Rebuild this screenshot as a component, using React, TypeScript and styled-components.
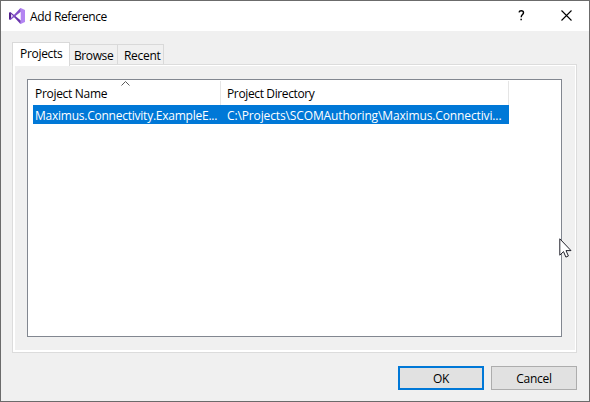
import React from "react";
import styled, { createGlobalStyle } from "styled-components";

const GlobalStyle = createGlobalStyle`
  *, *::before, *::after { box-sizing: border-box; }
  body { margin: 0; overflow: hidden; }
`;

const Dialog = styled.div`
  position: relative;
  display: flex;
  flex-direction: column;
  width: 590px;
  height: 402px;
  border: 1px solid #6b6b6b;
  background: #f0f0f0;
  color: #000;
  font: 12px/16px "Open Sans", "Noto Sans", sans-serif;
  cursor: default;
`;

const TitleBar = styled.header`
  display: flex;
  align-items: center;
  height: 30px;
  padding: 0 0 0 8px;
  background: #fff;
`;

const Label = styled.span<{ $spacing?: number }>`
  display: block;
  white-space: pre;
  letter-spacing: ${(p) => p.$spacing ?? -0.3}px;
`;

const Title = styled.div`
  flex: 1;
  margin-left: 5px;
  padding-top: 1px;
`;

const CaptionButton = styled.button`
  display: grid;
  place-items: center;
  width: 45px;
  height: 29px;
  padding: 0 0 1px;
  border: 0;
  background: none;
`;

const TabStrip = styled.div`
  display: flex;
  align-items: flex-end;
  height: 33px;
  margin-left: 11px;
`;

const Tab = styled.div<{ $width: number; $inset: number; $selected?: boolean }>`
  position: relative;
  width: ${(p) => p.$width}px;
  height: ${(p) => (p.$selected ? 24 : 20)}px;
  margin-bottom: ${(p) => (p.$selected ? -2 : 0)}px;
  padding: 3px 0 0 ${(p) => p.$inset}px;
  border: 1px solid #d9d9d9;
  border-bottom: 0;
  border-left-width: ${(p) => (p.$selected ? 1 : 0)}px;
  background: ${(p) => (p.$selected ? "#fff" : "#f0f0f0")};
  z-index: ${(p) => (p.$selected ? 1 : 0)};
`;

const TabPage = styled.section`
  width: 565px;
  height: 289px;
  margin-left: 11px;
  padding: 13px 12px;
  border: 1px solid #dcdcdc;
  background: #f0f0f0;
  box-shadow: inset 2px 1px 0 #fff, inset -1px -2px 0 #fff;
`;

const ListView = styled.div`
  width: 535px;
  height: 258px;
  margin: 1px 0 0 2px;
  padding: 1px 0 0 5px;
  border: 1px solid #828790;
  background: #fff;
`;

const HeaderRow = styled.div`
  display: grid;
  grid-template-columns: 188px 288px;
  height: 24px;
`;

const HeaderCell = styled.div<{ $inset: number }>`
  position: relative;
  padding: 5px 0 0 ${(p) => p.$inset}px;
  border-right: 1px solid #e5e5e5;
`;

const SortArrow = styled.svg`
  position: absolute;
  top: 0;
  left: 88px;
`;

const ItemRow = styled.div`
  display: grid;
  grid-template-columns: 188px 288px;
  width: 476px;
  height: 19px;
  background: #0078d7;
  color: #fff;
`;

const ItemCell = styled.div<{ $inset: number }>`
  padding: 3px 0 0 ${(p) => p.$inset}px;
`;

const Footer = styled.footer`
  display: flex;
  justify-content: flex-end;
  gap: 7px;
  padding: 13px 12px 0 0;
`;

const PushButton = styled.button<{ $primary?: boolean }>`
  display: grid;
  place-items: center;
  width: 86px;
  height: 24px;
  padding: 2px 0 0;
  border: ${(p) => (p.$primary ? "2px solid #0078d7" : "1px solid #adadad")};
  background: #e1e1e1;
  color: #000;
  font: inherit;
`;

const Pointer = styled.svg`
  position: absolute;
  left: 558px;
  top: 237px;
`;

const StudioLogo = () => (
  <svg width="16" height="16" viewBox="0 0 16 16">
    <path d="M.2 4.4 1.4 4 11.8 12.5V15.8L11 15.5 2.2 6V10.2L1.2 11.9 0 11.2V4.8z" fill="#6a36ad" />
    <path d="M0 4.8 1.8 5.4v5.2L0 11.3z" fill="#52218a" />
    <path d="M.2 11.3 1.5 12 11.8 3.8V.2L11 .5 1.6 10.6z" fill="#8450c8" />
    <path d="M11.7 0 16 2v12l-4.3 2-.9-.4.9-1V1.4l-.9-1z" fill="#b384f2" />
  </svg>
);

export default function App() {
  return (
    <>
      <GlobalStyle />
      <Dialog role="dialog" aria-label="Add Reference">
        <TitleBar>
          <StudioLogo />
          <Title><Label $spacing={-0.37}>Add Reference</Label></Title>
          <CaptionButton aria-label="Help">
            <svg width="7" height="11" viewBox="0 0 7 11">
              <path d="M1 2.4C1.3 1 2.3.8 3.2.8c1.4 0 2.3.7 2.3 1.9 0 1.8-2.3 2-2.3 4.5" fill="none" stroke="#000" strokeWidth="1.4" />
              <path d="M2.4 8.7h1.5v1.5H2.4z" />
            </svg>
          </CaptionButton>
          <CaptionButton aria-label="Close">
            <svg width="11" height="11" viewBox="0 0 11 11">
              <path d="M.5.5l10 10m0-10l-10 10" stroke="#000" strokeWidth="1.1" />
            </svg>
          </CaptionButton>
        </TitleBar>
        <TabStrip>
          <Tab $width={58} $inset={7} $selected><Label>Projects</Label></Tab>
          <Tab $width={48} $inset={4}><Label $spacing={-0.4}>Browse</Label></Tab>
          <Tab $width={46} $inset={6}><Label>Recent</Label></Tab>
        </TabStrip>
        <TabPage>
          <ListView>
            <HeaderRow>
              <HeaderCell $inset={2}>
                <Label>Project Name</Label>
                <SortArrow width="9" height="5" viewBox="0 0 9 5">
                  <path d="M.5 4.5l4-4 4 4" fill="none" stroke="#5a5a5a" />
                </SortArrow>
              </HeaderCell>
              <HeaderCell $inset={6}><Label $spacing={-0.37}>Project Directory</Label></HeaderCell>
            </HeaderRow>
            <ItemRow>
              <ItemCell $inset={2}><Label $spacing={-0.24}>Maximus.Connectivity.ExampleE...</Label></ItemCell>
              <ItemCell $inset={6}><Label $spacing={-0.13}>C:\Projects\SCOMAuthoring\Maximus.Connectivi...</Label></ItemCell>
            </ItemRow>
          </ListView>
        </TabPage>
        <Footer>
          <PushButton $primary><Label>OK</Label></PushButton>
          <PushButton><Label>Cancel</Label></PushButton>
        </Footer>
        <Pointer width="13" height="20" viewBox="0 0 13 20">
          <path d="M.8.8v16.4l3.7-3.6 2.4 5.5 2.5-1.1-2.4-5.4h5z" fill="#fff" stroke="#22222c" />
        </Pointer>
      </Dialog>
    </>
  );
}
